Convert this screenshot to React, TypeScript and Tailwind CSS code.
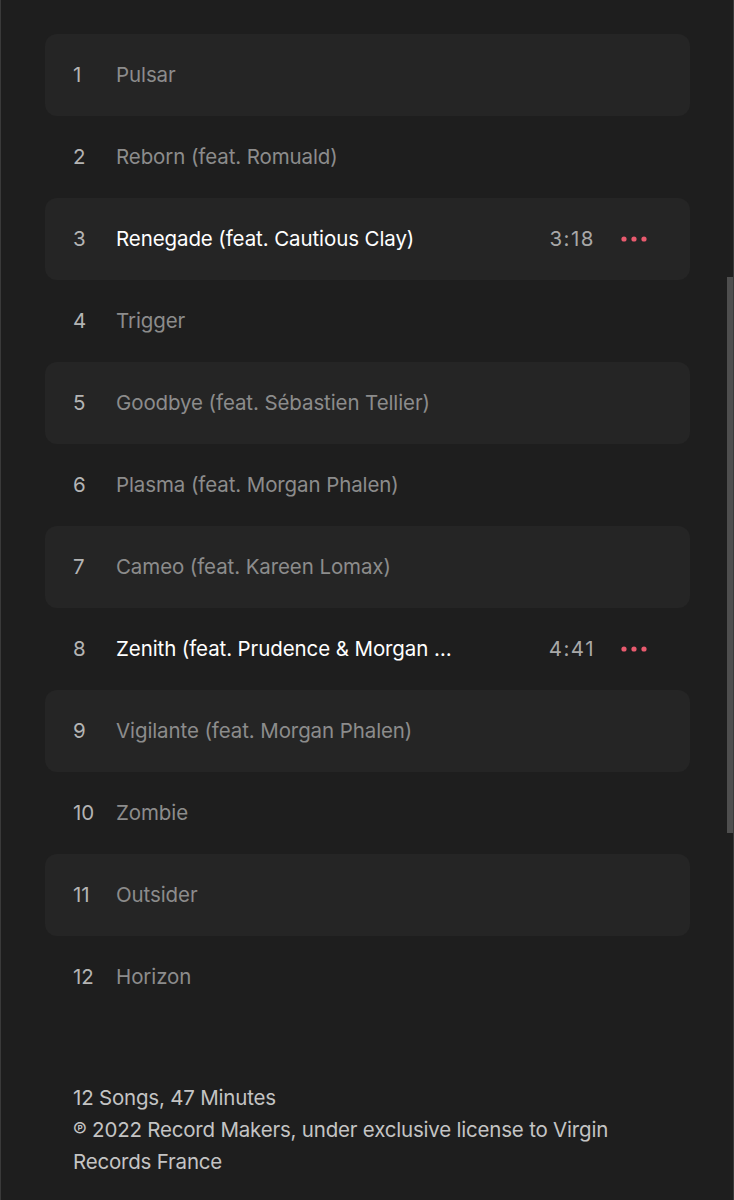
import React from 'react';

const tracks = [
  { n: 1, title: 'Pulsar' },
  { n: 2, title: 'Reborn (feat. Romuald)' },
  { n: 3, title: 'Renegade (feat. Cautious Clay)', time: '3:18', active: true },
  { n: 4, title: 'Trigger' },
  { n: 5, title: 'Goodbye (feat. Sébastien Tellier)' },
  { n: 6, title: 'Plasma (feat. Morgan Phalen)' },
  { n: 7, title: 'Cameo (feat. Kareen Lomax)' },
  { n: 8, title: 'Zenith (feat. Prudence & Morgan Phalen)', time: '4:41', active: true },
  { n: 9, title: 'Vigilante (feat. Morgan Phalen)' },
  { n: 10, title: 'Zombie' },
  { n: 11, title: 'Outsider' },
  { n: 12, title: 'Horizon' },
];

const Dots = () => (
  <svg width="26" height="6" viewBox="0 0 26 6" className="shrink-0">
    <circle cx="3" cy="3" r="2.6" fill="#e85a6e" />
    <circle cx="13" cy="3" r="2.6" fill="#e85a6e" />
    <circle cx="23" cy="3" r="2.6" fill="#e85a6e" />
  </svg>
);

export default function App() {
  return (
    <div
      className="relative min-h-[1200px] w-full bg-[#1e1e1e] border-x border-[#3a3a3a] overflow-hidden"
      style={{ fontFamily: 'Inter, "Noto Sans", sans-serif' }}
    >
      {/* scrollbar */}
      <div className="absolute right-0 top-[277px] h-[556px] w-[6px] bg-[#4e4e4e]" />

      <div className="pt-[34px] pl-[44px] pr-[43px]">
        {tracks.map((t) => (
          <div
            key={t.n}
            className={`flex items-center h-[82px] rounded-[12px] pl-[28px] pr-[43px] ${t.n % 2 === 1 ? 'bg-[#252525]' : ''}`}
          >
            <div className="w-[43px] shrink-0 text-[20.5px] text-[#b4b4b4]">{t.n}</div>
            <div
              className={`min-w-0 flex-1 truncate text-[20.5px] tracking-[-0.1px] ${t.active ? 'text-white' : 'text-[#8c8c8c]'}`}
            >
              {t.n === 8 ? 'Zenith (feat. Prudence & Morgan …' : t.title}
            </div>
            {t.time && (
              <div className="flex items-center gap-[26px] pl-6">
                <span className="text-[20.5px] tracking-[1.5px] text-[#a8a8a8]">{t.time}</span>
                <Dots />
              </div>
            )}
          </div>
        ))}
      </div>

      <div className="mt-[64px] pl-[72px] pr-[100px] text-[20.5px] leading-[32px] tracking-[-0.2px] text-[#c4c4c4]">
        <div>12 Songs, 47 Minutes</div>
        <div>℗ 2022 Record Makers, under exclusive license to Virgin Records France</div>
      </div>
    </div>
  );
}
